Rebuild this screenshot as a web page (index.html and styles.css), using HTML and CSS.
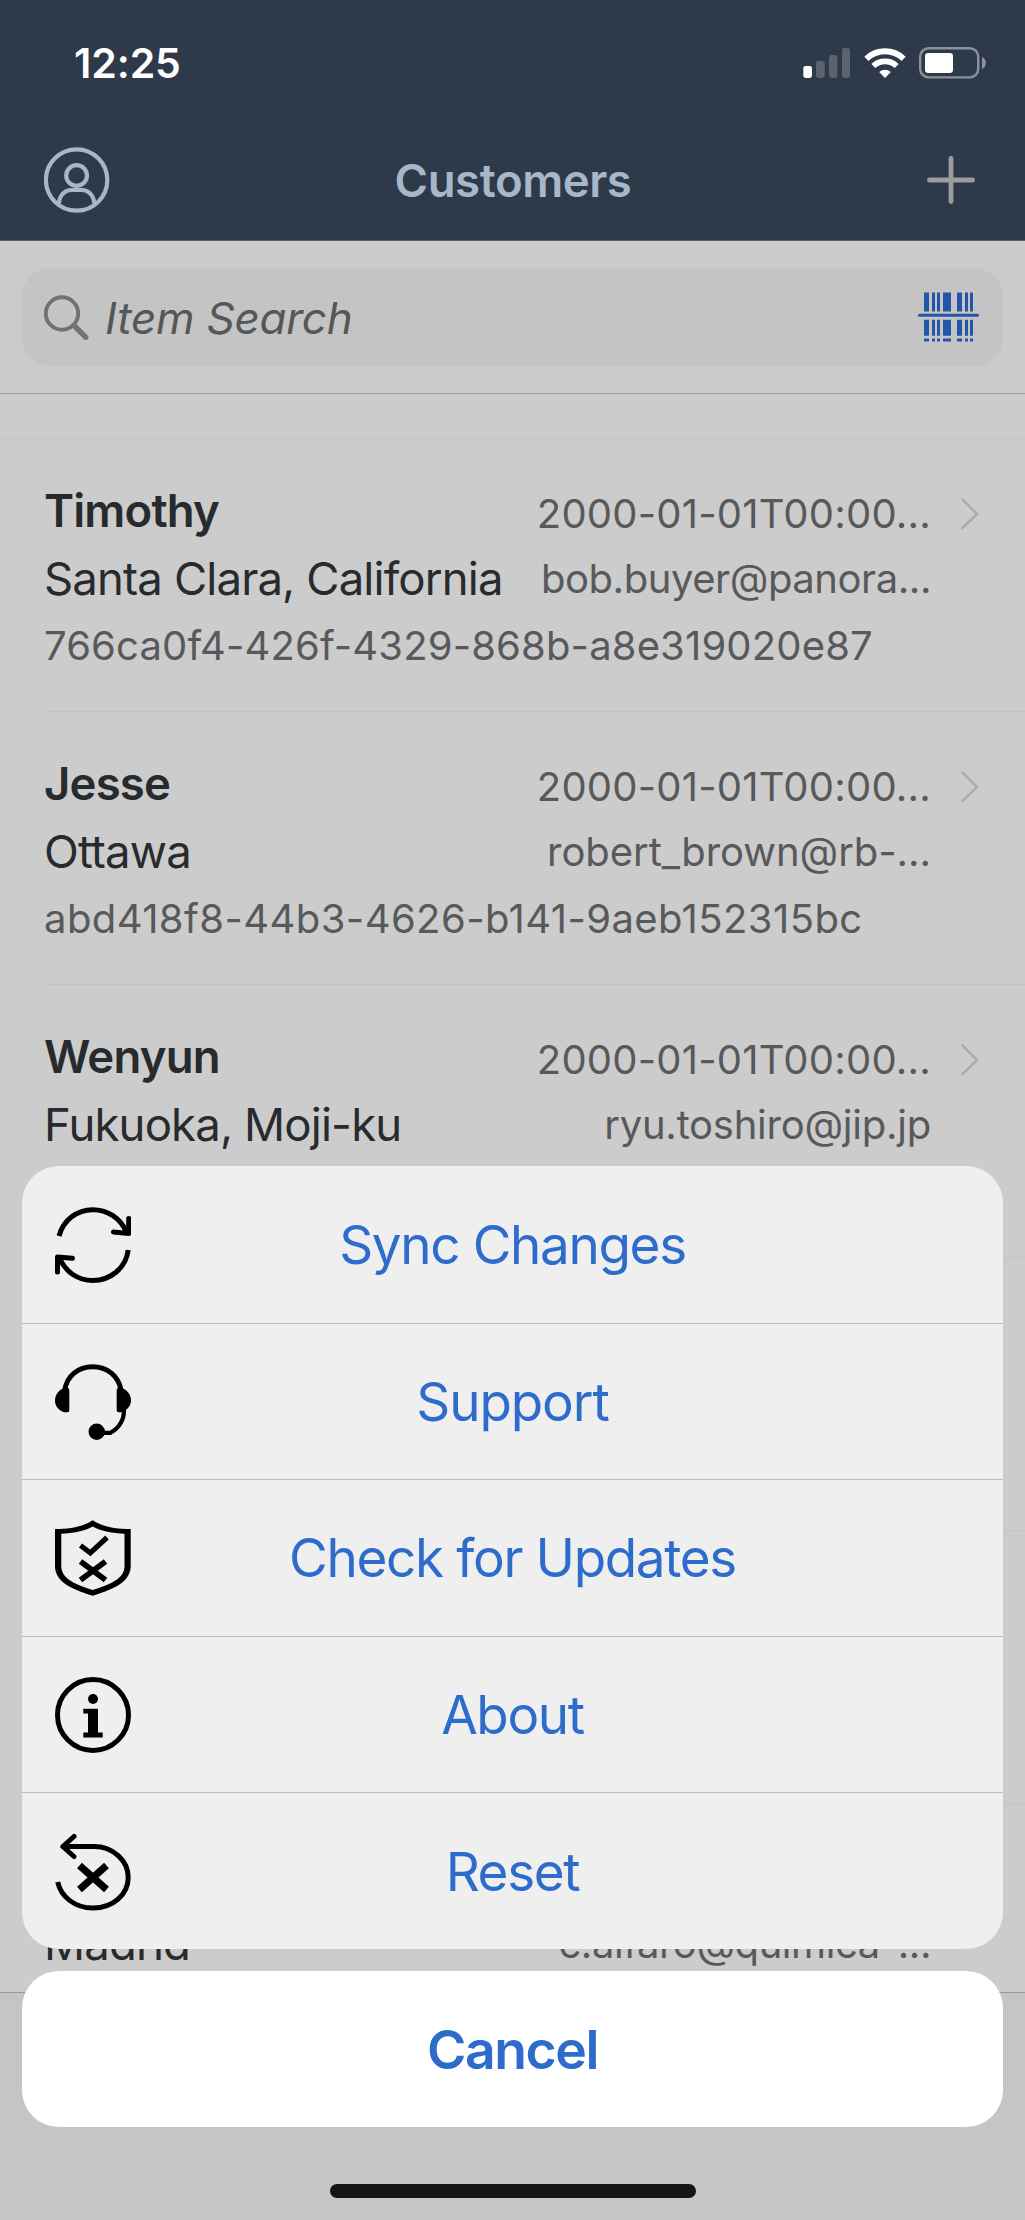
FILE: index.html
```
<!DOCTYPE html>
<html lang="en">
<head>
<meta charset="utf-8">
<title>Customers</title>
<link rel="stylesheet" href="styles.css">
</head>
<body>
<div class="screen">
  <header class="header">
    <div class="status-bar">
      <span class="time">12:25</span>
      <div class="status-icons">
        <svg width="47" height="32" viewBox="0 0 47 32">
          <rect x="0.3" y="19" width="8.7" height="12" rx="2.4" fill="#fff"/>
          <rect x="13" y="14" width="8.7" height="17" rx="2.4" fill="#59646f"/>
          <rect x="26" y="8" width="8.3" height="23" rx="2.4" fill="#59646f"/>
          <rect x="39" y="1" width="8" height="30" rx="2.4" fill="#59646f"/>
        </svg>
        <svg width="42" height="32" viewBox="0 0 42 32" fill="none" stroke="#fff">
          <path d="M2.4 11.8 A27 27 0 0 1 39.6 11.8" stroke-width="6"/>
          <path d="M9.3 19 A17 17 0 0 1 32.7 19" stroke-width="5.6"/>
          <path d="M21 31 L15.2 25 A8.4 8.4 0 0 1 26.8 25 Z" fill="#fff" stroke="none"/>
        </svg>
        <svg width="68" height="32" viewBox="0 0 68 32">
          <rect x="1.2" y="1.2" width="58" height="29.2" rx="8.5" fill="none" stroke="#8b929b" stroke-width="2.4"/>
          <rect x="6" y="6" width="28" height="20" rx="3.2" fill="#fff"/>
          <path d="M63 10 C68.2 12 68.2 20 63 22 Z" fill="#8b929b"/>
        </svg>
      </div>
    </div>
    <nav class="nav-bar">
      <svg width="66" height="66" viewBox="0 0 66 66" fill="none" stroke="#a6b7c8" stroke-width="4.2">
        <circle cx="32.600" cy="33" r="30.700"/>
        <circle cx="32.600" cy="28.500" r="10.400"/>
        <path d="M15.100 56.500 C15.100 48 21.600 43 27.100 43 H38.100 C43.600 43 50.100 48 50.100 56.500"/>
      </svg>
      <h1 class="title">Customers</h1>
      <svg width="48" height="48" viewBox="0 0 48 48" stroke="#9b9c9d" stroke-width="4.8" stroke-linecap="round">
        <path d="M24 2.400 V45.600 M2.400 24 H45.600"/>
      </svg>
    </nav>
  </header>

  <div class="search-area">
    <div class="search-field">
      <svg width="46" height="46" viewBox="0 0 46 46" fill="none" stroke="#717372">
        <circle cx="18" cy="19.500" r="16.200" stroke-width="3.900"/>
        <path d="M30 31.500 L41.800 43.300" stroke-width="5.400" stroke-linecap="round"/>
      </svg>
      <span class="placeholder">Item Search</span>
      <svg width="61" height="50" viewBox="0 0 61 50" fill="#2356a8">
        <defs>
          <g id="bars"><path d="M6 0h5v1H6zM14 0h3v1h-3zM19 0h3v1h-3zM25 0h8v1h-8zM39 0h5v1h-5zM47 0h3v1h-3zM52 0h3v1h-3z"/></g>
        </defs>
        <use href="#bars" transform="translate(0 .5) scale(1 19)"/>
        <use href="#bars" transform="translate(0 27.700) scale(1 16)"/>
        <use href="#bars" transform="translate(0 46.500) scale(1 3)"/>
        <rect x="0" y="21.700" width="61" height="3" rx="1.500"/>
      </svg>
    </div>
  </div>

  <main class="list">
    <div class="list-gap"></div>

    <article class="row">
      <div class="row-top">
        <div class="main">
          <div class="name">Timothy</div>
          <div class="place">Santa Clara, California</div>
        </div>
        <div class="meta">
          <div class="date">2000-01-01T00:00...</div>
          <div class="mail mail-tight">bob.buyer@panora...</div>
        </div>
        <svg class="chevron" width="18" height="32" viewBox="0 0 18 32"><path d="M1.500 1.500 L16 16 L1.500 30"/></svg>
      </div>
      <div class="code">766ca0f4-426f-4329-868b-a8e319020e87</div>
    </article>

    <article class="row">
      <div class="row-top">
        <div class="main">
          <div class="name">Jesse</div>
          <div class="place">Ottawa</div>
        </div>
        <div class="meta">
          <div class="date">2000-01-01T00:00...</div>
          <div class="mail mail-wide">robert_brown@rb-...</div>
        </div>
        <svg class="chevron" width="18" height="32" viewBox="0 0 18 32"><path d="M1.500 1.500 L16 16 L1.500 30"/></svg>
      </div>
      <div class="code code-wide">abd418f8-44b3-4626-b141-9aeb152315bc</div>
    </article>

    <article class="row">
      <div class="row-top">
        <div class="main">
          <div class="name">Wenyun</div>
          <div class="place">Fukuoka, Moji-ku</div>
        </div>
        <div class="meta">
          <div class="date">2000-01-01T00:00...</div>
          <div class="mail">ryu.toshiro@jip.jp</div>
        </div>
        <svg class="chevron" width="18" height="32" viewBox="0 0 18 32"><path d="M1.500 1.500 L16 16 L1.500 30"/></svg>
      </div>
    </article>

    <article class="row"></article>
    <article class="row"></article>

    <article class="row">
      <div class="row-top">
        <div class="main">
          <div class="name"></div>
          <div class="place">Madrid</div>
        </div>
        <div class="meta">
          <div class="date"></div>
          <div class="mail mail-tight">c.alfaro@quimica-...</div>
        </div>
        <div class="chevron-space"></div>
      </div>
    </article>
  </main>
  <footer class="toolbar"></footer>

  <div class="sheet">
    <div class="actions">
      <button class="action">
        <svg width="76" height="76" viewBox="0 0 76 76" fill="none" stroke="#000" stroke-width="5">
          <path d="M4 29 C8.500 13 22 2.700 37.700 2.700 C52 2.700 65 10.500 71.500 25"/>
          <path d="M73.700 11.500 V26.500 L58.500 25" stroke-linecap="round" stroke-linejoin="round"/>
          <path d="M73.200 43 C71 61 55.500 73.500 37.700 73.500 C23 73.500 10.500 65 4.500 51"/>
          <path d="M2.500 65 V50 L17.500 51.300" stroke-linecap="round" stroke-linejoin="round"/>
        </svg>
        <span>Sync Changes</span>
      </button>
      <button class="action">
        <svg width="76" height="76" viewBox="0 0 76 76">
          <path d="M9.700 26 C12 12 23 2.700 37.700 2.700 S63.500 12 66 26" fill="none" stroke="#000" stroke-width="5"/>
          <path d="M9 24 H12.500 Q14.300 24 14.300 26 V46.200 Q14.300 48.200 12.300 48.200 H9 C4 46.500 0 42.500 0 36.500 C0 31 3.500 26 9 24 Z"/>
          <path d="M67 24 H63.500 Q61.700 24 61.700 26 V46.200 Q61.700 48.200 63.700 48.200 H67 C72 46 76 42 76 36.500 C76 31 72.500 26 67 24 Z"/>
          <path d="M69 46 C69 57 63 64.500 55.500 68.800 H43" fill="none" stroke="#000" stroke-width="4.200"/>
          <circle cx="41.700" cy="67.800" r="8.200"/>
        </svg>
        <span class="label-support">Support</span>
      </button>
      <button class="action">
        <svg width="76" height="78" viewBox="0 0 76 78">
          <path fill-rule="evenodd" d="M37.700 1.300 C28 8 14 10 0 10 V47 C0 62 15 70 37.700 76.700 C60.500 70 75.700 62 75.700 47 V10 C61 10 47.500 8 37.700 1.300 Z M37.700 7.500 C47 12.500 57 14.300 69.500 14.700 V47 C69.500 58 59 64.500 37.700 71 C16.500 64.500 6.300 58 6.300 47 V14.700 C18.500 14.300 28.500 12.500 37.700 7.500 Z"/>
          <path d="M25.500 26.500 L35.300 33.800 L52 18.500" fill="none" stroke="#000" stroke-width="5.200"/>
          <path d="M25.500 42.500 L50.500 61 M50.500 42.500 L25.500 61" fill="none" stroke="#000" stroke-width="5.800"/>
        </svg>
        <span>Check for Updates</span>
      </button>
      <button class="action">
        <svg width="76" height="76" viewBox="0 0 76 76">
          <circle cx="38" cy="38" r="35.500" fill="none" stroke="#000" stroke-width="5"/>
          <circle cx="38" cy="22" r="5"/>
          <path d="M28.300 31.700 H43 V55.500 H47.700 V60.500 H28.300 V55.500 H33 V36.500 H28.300 Z"/>
        </svg>
        <span>About</span>
      </button>
      <button class="action">
        <svg width="76" height="78" viewBox="0 0 76 78" fill="none" stroke="#000" stroke-width="5">
          <path d="M2.700 49 C6 64 20 75 38 75 C58 75 73.200 61.500 73.200 44.500 C73.200 27.500 58 13.500 39 13.500 H8"/>
          <path d="M19 3.500 L7.800 13.500 L19 23.500" stroke-linecap="round" stroke-linejoin="round"/>
          <path d="M24.500 32.500 L51.500 56.500 M51.500 32.500 L24.500 56.500" stroke-width="7.200"/>
        </svg>
        <span>Reset</span>
      </button>
    </div>
    <button class="cancel">Cancel</button>
    <div class="home-indicator"></div>
  </div>
</div>
</body>
</html>
```

FILE: styles.css
```
* { box-sizing: border-box; }

body {
  margin: 0;
  font-family: Inter, "Liberation Sans", sans-serif;
}

svg { display: block; flex: none; }

button {
  margin: 0;
  border: 0;
  background: none;
  font-family: inherit;
}

.screen {
  position: relative;
  display: flex;
  flex-direction: column;
  width: 1025px;
  height: 2220px;
  overflow: hidden;
  background: #ccc;
}

/* Header */
.header {
  height: 241px;
  background: #2e3a4a;
  border-bottom: 1px solid #56616e;
}

.status-bar {
  display: flex;
  align-items: center;
  justify-content: space-between;
  height: 126px;
  padding: 0 38px 0 74px;
}

.time {
  color: #fff;
  font-size: 41px;
  font-weight: 600;
  letter-spacing: -0.1px;
}

.status-icons {
  display: flex;
  gap: 13.5px;
}

.nav-bar {
  display: flex;
  align-items: center;
  justify-content: space-between;
  height: 108px;
  padding: 0 50px 0 44px;
}

.title {
  margin: 0 0 0 -11px;
  color: #a6b7c8;
  font-size: 45.5px;
  font-weight: 600;
  letter-spacing: -0.42px;
}

/* Search */
.search-area {
  height: 153px;
  padding: 27px 22px;
  background: #cbcbcb;
  border-bottom: 1px solid #9f9f9f;
}

.search-field {
  display: flex;
  align-items: center;
  height: 98px;
  padding: 0 24px 0 22px;
  border-radius: 28px;
  background: #c4c4c4;
}

.placeholder {
  flex: 1;
  padding: 2px 0 0 15px;
  color: #555758;
  font-size: 44px;
  font-style: italic;
  letter-spacing: -0.25px;
}

/* Customer list */
.list {
  height: 1598px;
  overflow: hidden;
}

.list-gap {
  height: 45px;
  border-bottom: 1px solid #c5c5c5;
}

.row {
  height: 273px;
  margin-left: 44px;
  padding: 37px 46px 0 0;
  border-bottom: 1px solid #c4c4c4;
}

.row-top {
  display: flex;
  height: 136px;
}

.main {
  flex: 1;
  padding-top: 1px;
  color: #282b2e;
  font-size: 45.5px;
  line-height: 68px;
  white-space: nowrap;
}

.name {
  height: 68px;
  font-weight: 600;
  letter-spacing: -0.81px;
}

.place { letter-spacing: -0.86px; }

.meta {
  padding: 5px 1px 0 0;
  color: #58595b;
  font-size: 40px;
  line-height: 65px;
  text-align: right;
  white-space: nowrap;
}

.date {
  height: 65px;
  letter-spacing: 0.2px;
}

.mail { letter-spacing: -0.24px; }
.mail-tight { letter-spacing: -0.44px; }
.mail-wide { letter-spacing: -0.05px; }

.code {
  padding-top: 1px;
  color: #58595b;
  font-size: 40px;
  line-height: 66px;
  letter-spacing: 0.15px;
  white-space: nowrap;
}

.code-wide { letter-spacing: 0.42px; }

.chevron {
  margin: 22px 0 0 29px;
  fill: none;
  stroke: #adadad;
  stroke-width: 2.6px;
  stroke-linecap: round;
  stroke-linejoin: round;
}

.chevron-space { width: 47px; }

.toolbar {
  flex: 1;
  background: #c5c5c5;
  border-top: 1px solid #999;
}

/* Action sheet, over the dimmed list */
.sheet {
  position: absolute;
  left: 22px;
  right: 22px;
  bottom: 22px;
  display: flex;
  flex-direction: column;
}

.actions {
  height: 783px;
  display: grid;
  grid-template-rows: repeat(5, 1fr);
  overflow: hidden;
  border-radius: 37px;
  background: #efefef;
}

.action {
  display: grid;
  grid-template-columns: 76px 1fr 76px;
  align-items: center;
  padding: 1px 33px 0;
  color: #2e6ccc;
  font-size: 53px;
  letter-spacing: -1.35px;
}

.label-support { letter-spacing: -1.1px; }

.action + .action { border-top: 1px solid #bcbdbd; }

.cancel {
  height: 156px;
  margin-top: 22px;
  border-radius: 37px;
  background: #fff;
  color: #2e6ccc;
  font-size: 53.5px;
  font-weight: 600;
  letter-spacing: -1.43px;
}

.home-indicator {
  width: 366px;
  height: 14px;
  margin: 57px auto 0;
  border-radius: 7px;
  background: #151515;
}
```
